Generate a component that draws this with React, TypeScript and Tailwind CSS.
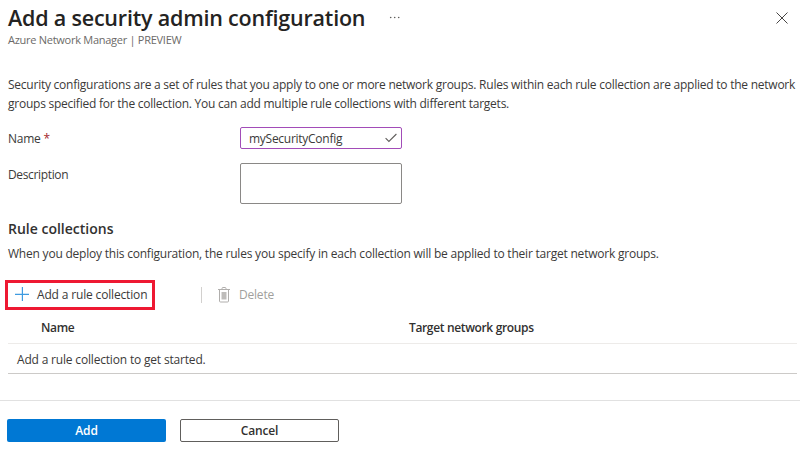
export default function App() {
  return (
    <main className="flex h-[450px] w-[800px] flex-col overflow-hidden whitespace-nowrap bg-white font-['Open_Sans','Noto_Sans',sans-serif] text-[12px] leading-5 text-[#3b3a39]">
      <header className="flex h-[74px] justify-between pl-2 pr-3">
        <div>
          <div className="flex h-[33px] items-center pt-[2px]">
            <h1 className="w-[381px] text-[21.5px] font-semibold leading-7 tracking-[-0.2px] text-[#242322]">Add a security admin configuration</h1>
            <svg className="h-3 w-3" viewBox="0 0 12 12" fill="#605e5c">
              <circle cx="1.7" cy="5.5" r="0.8" />
              <circle cx="5.7" cy="5.5" r="0.8" />
              <circle cx="9.7" cy="5.5" r="0.8" />
            </svg>
          </div>
          <p className="text-[11px] leading-[14px] tracking-[-0.27px] text-[#6c6a68]">Azure Network Manager | PREVIEW</p>
        </div>
        <svg className="mt-3 h-3 w-3" viewBox="0 0 12 12" fill="none" stroke="#484644">
          <path d="M.5.5l11 11M11.5.5l-11 11" />
        </svg>
      </header>

      <section className="flex flex-col pl-2">
        <p className="pt-px tracking-[-0.24px] leading-[19px]">Security configurations are a set of rules that you apply to one or more network groups. Rules within each rule collection are applied to the network</p>
        <p className="tracking-[-0.24px]">groups specified for the collection. You can add multiple rule collections with different targets.</p>
        <div className="mt-[13px] flex h-[22px] items-center">
          <label className="w-[232px] pt-px tracking-[-0.25px]">Name <span className="text-[#a4262c]">*</span></label>
          <div className="flex h-[22px] w-[162px] items-center justify-between rounded-[2px] border border-[#a24cb8] pl-2 pr-1">
            <span className="pt-px tracking-[-0.27px]">mySecurityConfig</span>
            <svg className="h-3 w-3" viewBox="0 0 12 12" fill="none" stroke="#605e5c" strokeWidth="1.1">
              <path d="M.6 6.2l3.3 3.3L11.4 2" />
            </svg>
          </div>
        </div>
        <div className="mt-[14px] flex h-[41px]">
          <label className="w-[232px] pt-0.5 tracking-[-0.35px]">Description</label>
          <div className="w-[162px] rounded-[2px] border border-[#8a8886]" />
        </div>
        <h2 className="mt-[15px] text-[14px] font-semibold text-[#323130]">Rule collections</h2>
        <p className="mt-[5px] tracking-[-0.215px]">When you deploy this configuration, the rules you specify in each collection will be applied to their target network groups.</p>
      </section>

      <div className="mt-4 flex h-[30px] items-center pl-[5px]">
        <div className="flex h-[30px] w-[150px] items-center border-[3px] border-[#ee1832] pl-[7px]">
          <svg className="mb-0.5 h-[14px] w-[14px]" viewBox="0 0 14 14" fill="none" stroke="#3f9be0" strokeWidth="1.2">
            <path d="M7.4 0v14M0 7.4h14" />
          </svg>
          <span className="ml-2 tracking-[-0.16px]">Add a rule collection</span>
        </div>
        <div className="ml-[46px] h-4 w-px bg-[#d2d0ce]" />
        <svg className="ml-4 h-4 w-3" viewBox="0 0 12 16" fill="none" stroke="#b0aeac">
          <path d="M0 2.5h12M4 2.5v-1q0-1 1-1h2q1 0 1 1v1M1.5 2.5v11.5q0 1 1 1h7q1 0 1-1V2.5" />
          <path d="M3.5 5h5v7.5h-5z" fill="#bebcba" stroke="none" />
        </svg>
        <span className="ml-[9px] tracking-[-0.2px] text-[#a19f9d]">Delete</span>
      </div>

      <div className="ml-2 mr-[3px]">
        <div className="flex h-[34px] items-center border-b border-[#edebe9] pt-0.5 font-semibold tracking-[-0.35px] text-[#323130]">
          <span className="w-[368px] pl-[33px]">Name</span>
          <span className="pl-[33px]">Target network groups</span>
        </div>
        <div className="flex h-[30px] items-center border-b border-[#cccac8] pl-[9px] pt-0.5 tracking-[-0.18px]">Add a rule collection to get started.</div>
      </div>

      <footer className="mt-[26px] flex gap-[14px] border-t border-[#e1e1e1] pl-[7px] pt-[18px] font-semibold tracking-[-0.15px]">
        <button className="h-[23px] w-[159px] rounded-[2px] bg-[#0078d4] leading-5 text-white">Add</button>
        <button className="h-[23px] w-[159px] rounded-[2px] border border-[#605e5c] leading-5 text-[#323130]">Cancel</button>
      </footer>
    </main>
  );
}
